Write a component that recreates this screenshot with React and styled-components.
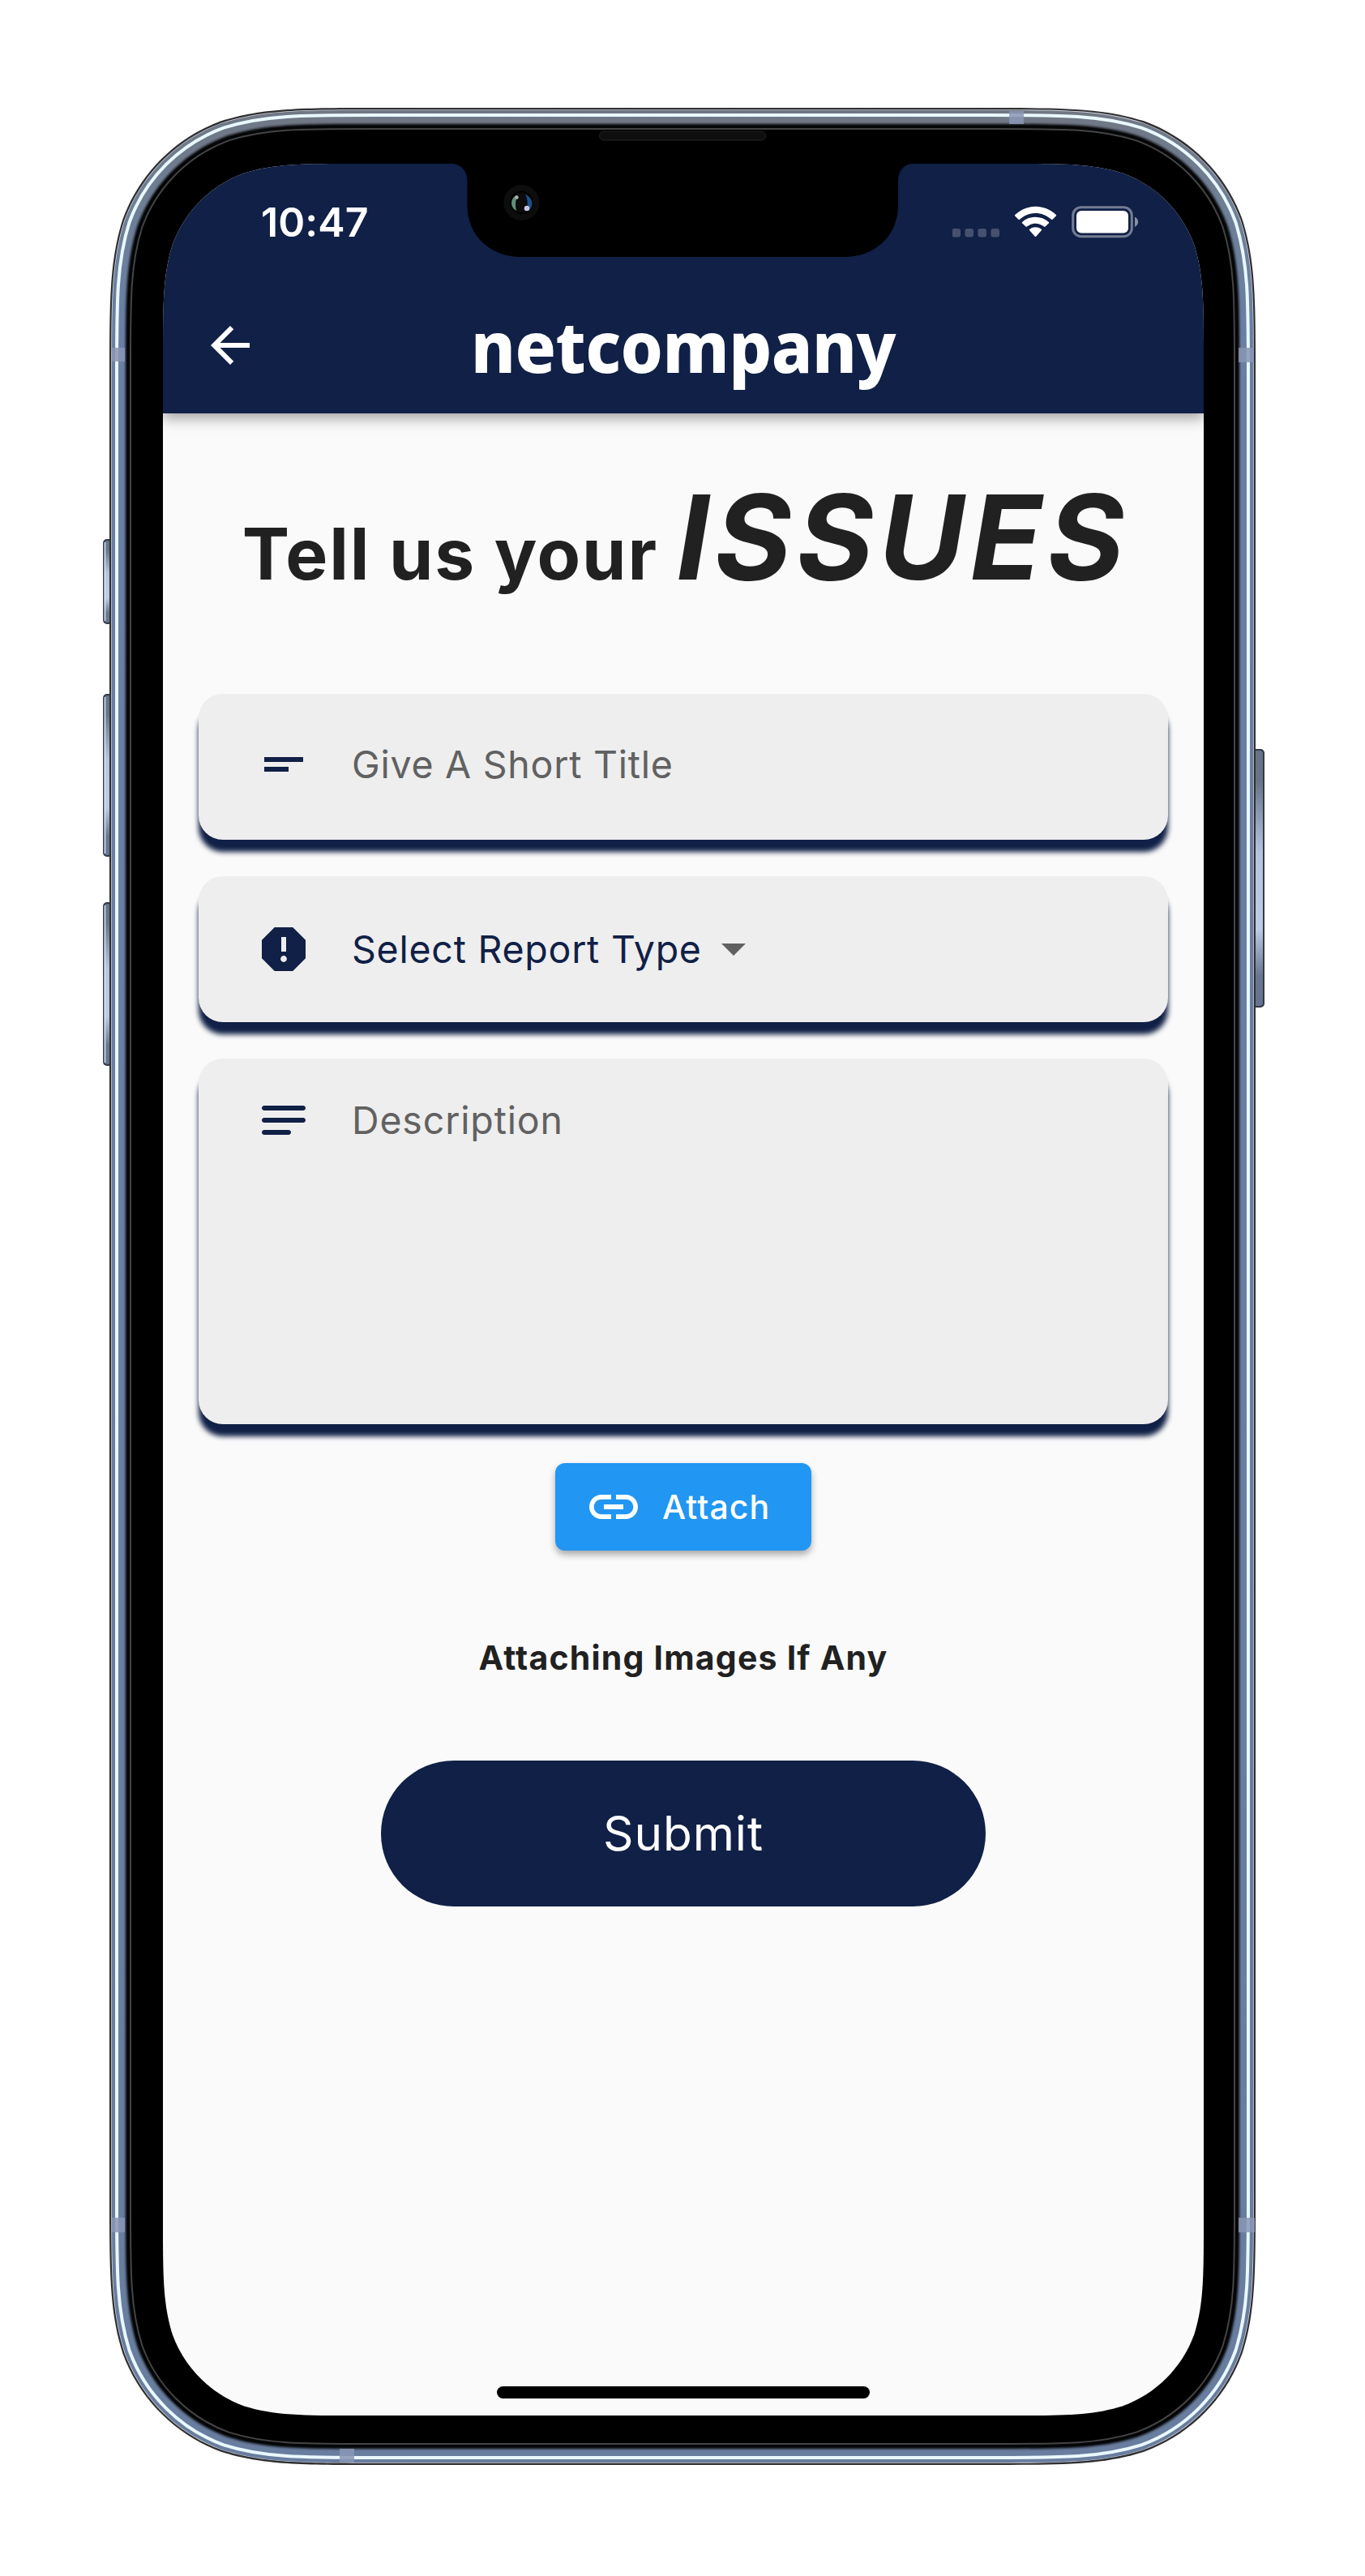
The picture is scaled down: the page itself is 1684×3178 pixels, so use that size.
import React from "react";
import styled, { createGlobalStyle } from "styled-components";

const NAVY = "#102046";

const GlobalStyle = createGlobalStyle`
  * { box-sizing: border-box; }
  body { margin: 0; background: #fff; font-family: Inter, "Liberation Sans", sans-serif; }
`;

/* Rounded rectangle with continuous-curvature corners. */
const smoothRect = (x, y, w, h, r) => {
  const R = x + w;
  const B = y + h;
  const k = [1.528665, 1.08849296, 0.86840694, 0.63149379, 0.37282383, 0.16905956, 0.07491139].map((v) => v * r);
  const [a, b, c, d, e, f, g] = k;
  return [
    `M${x + a} ${y}H${R - a}`,
    `C${R - b} ${y} ${R - c} ${y} ${R - d} ${y + g}`,
    `C${R - e} ${y + f} ${R - f} ${y + e} ${R - g} ${y + d}`,
    `C${R} ${y + c} ${R} ${y + b} ${R} ${y + a}`,
    `V${B - a}`,
    `C${R} ${B - b} ${R} ${B - c} ${R - g} ${B - d}`,
    `C${R - f} ${B - e} ${R - e} ${B - f} ${R - d} ${B - g}`,
    `C${R - c} ${B} ${R - b} ${B} ${R - a} ${B}`,
    `H${x + a}`,
    `C${x + b} ${B} ${x + c} ${B} ${x + d} ${B - g}`,
    `C${x + e} ${B - f} ${x + f} ${B - e} ${x + g} ${B - d}`,
    `C${x} ${B - c} ${x} ${B - b} ${x} ${B - a}`,
    `V${y + a}`,
    `C${x} ${y + b} ${x} ${y + c} ${x + g} ${y + d}`,
    `C${x + f} ${y + e} ${x + e} ${y + f} ${x + d} ${y + g}`,
    `C${x + c} ${y} ${x + b} ${y} ${x + a} ${y}Z`,
  ].join("");
};

const W = 1414;
const H = 2908;
const inset = (i, r) => smoothRect(i, i, W - 2 * i, H - 2 * i, r);

const Page = styled.div`
  width: 1684px;
  height: 3178px;
  padding: 133px 135px 0;
  background: #fff;
`;
const Phone = styled.div`
  position: relative;
  width: ${W}px;
  height: ${H}px;
  padding: 69px 64px 0 66px;
`;
const FrameArt = styled.svg`
  position: absolute;
  left: 0;
  top: 0;
  overflow: visible;
`;
const Screen = styled.main`
  position: relative;
  display: flex;
  flex-direction: column;
  width: 1284px;
  height: 2778px;
  background: #fafafa;
  clip-path: path("${smoothRect(0, 0, 1284, 2778, 158)}");
`;
const NotchArt = styled.svg`
  position: absolute;
  left: 50%;
  top: -45px;
  margin-left: -286px;
  overflow: visible;
`;
const Header = styled.header`
  flex: none;
  height: 308px;
  background: ${NAVY};
  box-shadow: 0 6px 16px rgba(0, 0, 0, 0.36);
`;
const StatusBar = styled.div`
  display: flex;
  justify-content: space-between;
  align-items: center;
  height: 144px;
  padding: 0 80px 0 121px;
`;
const Time = styled.span`
  color: #fff;
  font-size: 50px;
  font-weight: 600;
  line-height: 60px;
  letter-spacing: 0.1px;
`;
const StatusIcons = styled.svg`
  display: block;
`;
const Toolbar = styled.div`
  display: grid;
  grid-template-columns: 72px 1fr 72px;
  align-items: center;
  height: 160px;
  padding: 0 47px;
`;
const BackButton = styled.button`
  display: flex;
  padding: 0;
  border: 0;
  background: none;
`;
/* Slightly narrowed wordmark. */
const Brand = styled.div`
  color: #fff;
  font-family: "Noto Sans", sans-serif;
  font-size: 88px;
  font-weight: 800;
  line-height: 120px;
  letter-spacing: -0.5px;
  text-align: center;
  white-space: nowrap;
  transform: scaleX(0.946);
`;
const Body = styled.section`
  flex: 1;
  display: flex;
  flex-direction: column;
  align-items: center;
  padding: 0 44px;
`;
const Title = styled.h1`
  margin: 63px 0 0;
  height: 283px;
  color: #212121;
  font-size: 87.5px;
  font-weight: 700;
  line-height: 180px;
  letter-spacing: 1.85px;
  white-space: nowrap;
`;
const Emphasis = styled.em`
  margin-right: -6px;
  font-size: 145px;
  font-style: italic;
  letter-spacing: 6.4px;
`;
const Form = styled.div`
  display: flex;
  flex-direction: column;
  gap: 45px;
  width: 1196px;
`;
const Field = styled.div`
  display: flex;
  align-items: ${(p) => (p.$tall ? "flex-start" : "center")};
  gap: 48px;
  height: ${(p) => (p.$tall ? 451 : 180)}px;
  padding: ${(p) => p.$pad};
  border-radius: 30px;
  background: #eee;
  box-shadow: 0 15px 6px ${NAVY};
`;
const FieldText = styled.span`
  color: ${(p) => (p.$active ? NAVY : "#616161")};
  font-size: 46.5px;
  line-height: 72px;
  letter-spacing: ${(p) => p.$spacing}px;
  white-space: nowrap;
`;
const Selection = styled.div`
  display: flex;
  align-items: center;
  gap: 24px;
`;
const Caret = styled.i`
  border: 15px solid transparent;
  border-top-color: #616161;
  border-bottom: 0;
`;
const AttachButton = styled.button`
  display: flex;
  align-items: center;
  gap: 24px;
  width: 316px;
  height: 108px;
  margin: 48px 0 0;
  padding: 0 0 0 36px;
  border: 0;
  border-radius: 12px;
  background: #2196f3;
  box-shadow: 0 5px 8px rgba(0, 0, 0, 0.32);
  color: #fff;
  font: 500 41px/60px Inter, sans-serif;
  letter-spacing: 1.1px;
`;
const Caption = styled.p`
  margin: 102px 0 0;
  color: #212121;
  font-size: 41px;
  font-weight: 700;
  line-height: 60px;
  letter-spacing: 1.2px;
`;
const SubmitButton = styled.button`
  width: 746px;
  height: 180px;
  margin: 97px 0 0;
  padding: 0;
  border: 0;
  border-radius: 90px;
  background: ${NAVY};
  color: #fff;
  font: 400 58.5px/70px Inter, sans-serif;
  letter-spacing: 0.9px;
`;
const HomeIndicator = styled.div`
  align-self: center;
  width: 460px;
  height: 15px;
  margin-bottom: 21px;
  border-radius: 8px;
  background: #000;
`;

const Icon = ({ color = "#fff", d }) => (
  <svg width="72" height="72" viewBox="0 0 24 24" fill={color}>
    <path d={d} />
  </svg>
);

const ICONS = {
  back: "M20 11H7.83l5.59-5.59L12 4l-8 8 8 8 1.41-1.41L7.83 13H20v-2z",
  shortText: "M4 9h16v2H4V9zm0 4h10v2H4v-2z",
  report:
    "M15.73 3H8.27L3 8.27v7.46L8.27 21h7.46L21 15.73V8.27L15.73 3zM12 17.3c-.72 0-1.3-.58-1.3-1.3s.58-1.3 1.3-1.3 1.3.58 1.3 1.3-.58 1.3-1.3 1.3zm1-4.3h-2V7h2v6z",
  notes:
    "M20 11H4c-.55 0-1 .45-1 1s.45 1 1 1h16c.55 0 1-.45 1-1s-.45-1-1-1zM4 18h10c.55 0 1-.45 1-1s-.45-1-1-1H4c-.55 0-1 .45-1 1s.45 1 1 1zM20 6H4c-.55 0-1 .45-1 1s.45 1 1 1h16c.55 0 1-.45 1-1s-.45-1-1-1z",
  link: "M3.9 12c0-1.71 1.39-3.1 3.1-3.1h4V7H7c-2.76 0-5 2.24-5 5s2.24 5 5 5h4v-1.9H7c-1.71 0-3.1-1.39-3.1-3.1zM8 13h8v-2H8v2zm9-6h-4v1.9h4c1.71 0 3.1 1.39 3.1 3.1s-1.39 3.1-3.1 3.1h-4V17h4c2.76 0 5-2.24 5-5s-2.24-5-5-5z",
};

const SideButton = ({ x, y, w, h, right }) => (
  <g>
    <rect x={x} y={y} width={w + 4} height={h} rx="5" fill="#343a48" transform={right ? "translate(-4 0)" : undefined} />
    <rect x={right ? x - 2 : x + 1.5} y={y + 2} width={w} height={h - 4} rx="4" fill="url(#side)" />
    {!right && <rect x={x + 1.5} y={y + 4} width="2" height={h - 8} fill="#dbe5f4" opacity="0.75" />}
  </g>
);

const DeviceFrame = () => (
  <FrameArt width={W} height={H} viewBox={`0 0 ${W} ${H}`}>
    <defs>
      <linearGradient id="side" x1="0" y1="0" x2="0" y2="1">
        <stop offset="0" stopColor="#657489" />
        <stop offset="0.12" stopColor="#66758a" />
        <stop offset="0.4" stopColor="#b4c4df" />
        <stop offset="0.7" stopColor="#bccbe6" />
        <stop offset="0.88" stopColor="#697890" />
        <stop offset="1" stopColor="#657390" />
      </linearGradient>
      <linearGradient id="metal" x1="0" y1="0" x2="0" y2="1">
        <stop offset="0" stopColor="#707784" />
        <stop offset="0.04" stopColor="#6e7f96" />
        <stop offset="0.09" stopColor="#6a7fa3" />
        <stop offset="1" stopColor="#697d9f" />
      </linearGradient>
      <filter id="soft" x="-1%" y="-1%" width="102%" height="102%">
        <feGaussianBlur stdDeviation="1.5" />
      </filter>
    </defs>
    <SideButton x={-8} y={532} w={8} h={105} />
    <SideButton x={-8} y={723} w={8} h={201} />
    <SideButton x={-8} y={980} w={8} h={202} />
    <SideButton x={1413} y={791} w={12} h={319} right />
    <path d={inset(0, 218)} fill="#2f2f32" />
    <path d={inset(2.200, 216)} fill="#d3d7da" />
    <path d={inset(3, 215)} fill="url(#metal)" />
    <path d={inset(9, 209)} fill="none" stroke="#e9f8fd" strokeWidth="4" />
    <path d={inset(20, 198)} fill="#000" filter="url(#soft)" />
    <path d={inset(22, 196)} fill="#050607" />
    <path d={inset(26, 192)} fill="#000" stroke="#444445" strokeWidth="2" />
    <g fill="#8a96b6" opacity="0.85">
      <rect x="3" y="296" width="16" height="17" />
      <rect x="1393" y="296" width="19" height="18" />
      <rect x="1110" y="4" width="18" height="16" />
      <rect x="3" y="2603" width="16" height="18" />
      <rect x="1393" y="2603" width="20" height="18" />
      <rect x="284" y="2888" width="18" height="17" />
    </g>
  </FrameArt>
);

const Notch = () => (
  <NotchArt width="570" height="165" viewBox="0 0 570 165">
    <path d="M0 44H569V45C559 45 551 53 551 66V96C551 134 522.500 160 484.500 160H86C48 160 19.500 134 19.500 96V66C19.500 53 11 45 0 45Z" fill="#000" />
    <circle cx="86.500" cy="93" r="22" fill="#0d0d0e" />
    <circle cx="86.500" cy="93" r="14.500" fill="#000" />
    <circle cx="86.500" cy="93" r="12" fill="#0d0b0c" />
    <path d="M80 84C72 88 72 99 80 103C78.500 96 78.500 91 81.500 85Z" fill="#5f8f79" />
    <path d="M91 83C101 87 102 98 95 103C92 101 96 92 91 83Z" fill="#1c4f88" />
    <circle cx="80.500" cy="86.500" r="2.200" fill="#a5b5ad" />
    <circle cx="93" cy="100" r="3.300" fill="#c9c8e4" />
  </NotchArt>
);

const StatusGlyphs = () => (
  <StatusIcons width="230" height="42" viewBox="0 0 230 42">
    <g fill="#fff" opacity="0.22">
      {[-0.5, 15.5, 31.5, 47.5].map((x) => (
        <rect key={x} x={x} y="29" width="10.500" height="10.500" rx="3" />
      ))}
    </g>
    <g fill="#fff">
      <path d="M77.200 13.500a1 1 0 0 1 0-1.400C91.500-1.600 113.500-1.600 127.800 12.100a1 1 0 0 1 0 1.400L123.500 17.700a1 1 0 0 1-1.400 0C110.500 7.300 94.500 7.300 82.900 17.700a1 1 0 0 1-1.400 0Z" />
      <path d="M86.200 22.400a1 1 0 0 1 0-1.500C95.500 12.700 109.500 12.700 118.800 20.900a1 1 0 0 1 0 1.500L114.500 26.600a1 1 0 0 1-1.400 0C106.500 21.500 98.500 21.500 91.900 26.600a1 1 0 0 1-1.400 0Z" />
      <path d="M95.200 31.200a1 1 0 0 1 .1-1.500C99.500 26.400 105.500 26.400 109.700 29.700a1 1 0 0 1 .1 1.500L103.200 38.700a1 1 0 0 1-1.400 0Z" />
    </g>
    <rect x="148.700" y="2.700" width="72.600" height="36" rx="10" fill="none" stroke="#fff" strokeOpacity="0.42" strokeWidth="3" />
    <rect x="153" y="7" width="64" height="27.500" rx="6" fill="#fff" />
    <path d="M225 14.500C230.500 17 230.500 24.500 225 27Z" fill="#fff" opacity="0.5" />
  </StatusIcons>
);

const Speaker = () => (
  <FrameArt width={W} height="60" viewBox={`0 0 ${W} 60`}>
    <rect x="604.500" y="29" width="205" height="11" rx="5.500" fill="#0e0e0e" stroke="#232323" />
  </FrameArt>
);

export default function App() {
  return (
    <Page>
      <GlobalStyle />
      <Phone>
        <DeviceFrame />
        <Speaker />
        <Screen>
          <Header>
            <StatusBar>
              <Time>10:47</Time>
              <StatusGlyphs />
            </StatusBar>
            <Toolbar>
              <BackButton aria-label="Back">
                <Icon d={ICONS.back} />
              </BackButton>
              <Brand>netcompany</Brand>
            </Toolbar>
          </Header>
          <Body>
            <Title>
              Tell us your <Emphasis>ISSUES</Emphasis>
            </Title>
            <Form>
              <Field $pad="0 69px 6px">
                <Icon d={ICONS.shortText} color={NAVY} />
                <FieldText $spacing={0.75}>Give A Short Title</FieldText>
              </Field>
              <Field $pad="0 69px">
                <Icon d={ICONS.report} color={NAVY} />
                <Selection>
                  <FieldText $active $spacing={0.75}>Select Report Type</FieldText>
                  <Caret />
                </Selection>
              </Field>
              <Field $tall $pad="40px 69px 0">
                <Icon d={ICONS.notes} color={NAVY} />
                <FieldText $spacing={0.85}>Description</FieldText>
              </Field>
            </Form>
            <AttachButton>
              <Icon d={ICONS.link} />
              Attach
            </AttachButton>
            <Caption>Attaching Images If Any</Caption>
            <SubmitButton>Submit</SubmitButton>
          </Body>
          <HomeIndicator />
          <Notch />
        </Screen>
      </Phone>
    </Page>
  );
}
